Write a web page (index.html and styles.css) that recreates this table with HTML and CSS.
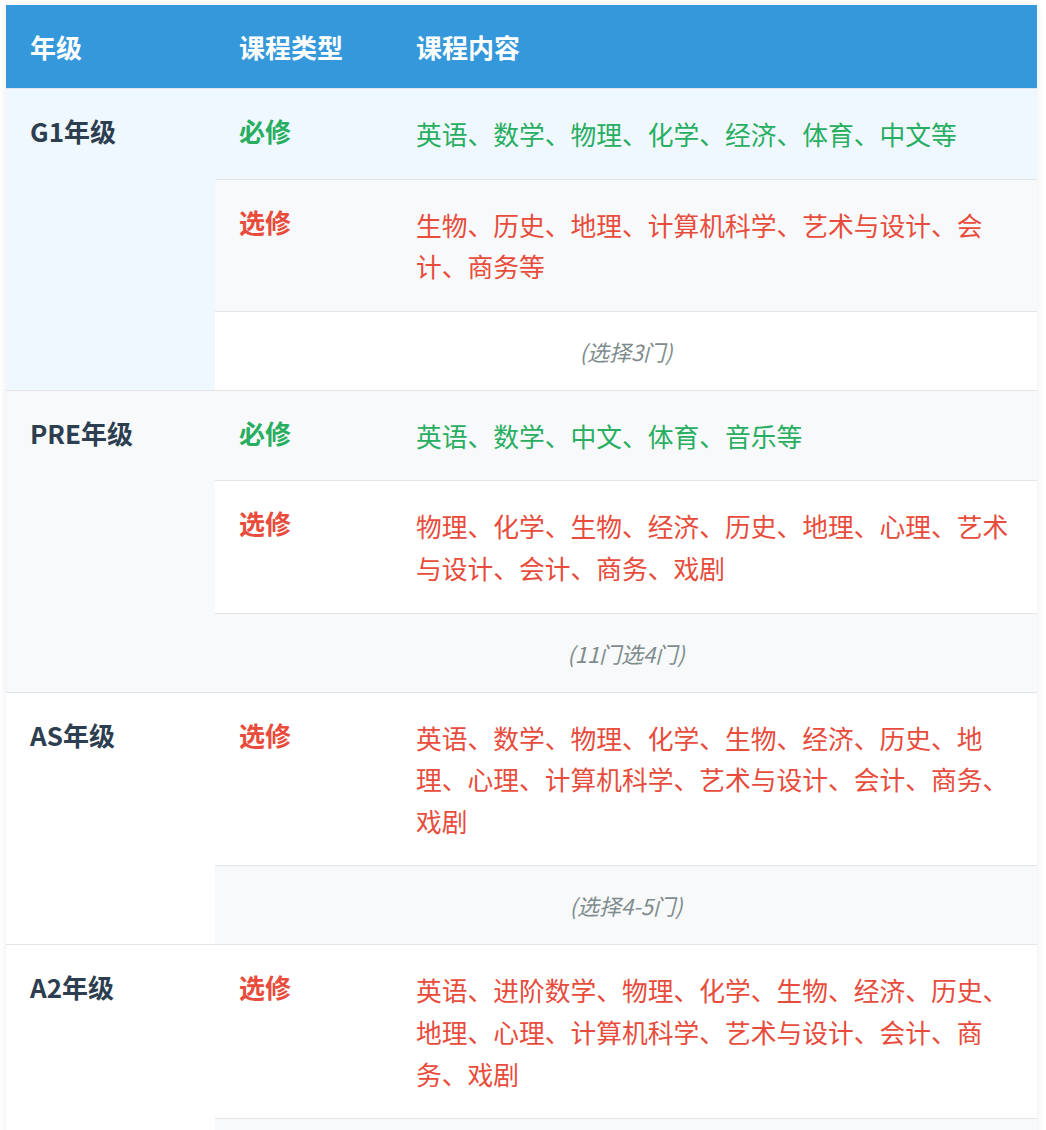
FILE: index.html
```html
<!DOCTYPE html>
<html lang="zh-CN">
<head>
<meta charset="utf-8">
<title>课程设置</title>
<link rel="stylesheet" href="styles.css">
</head>
<body>
<div class="wrap">
  <table class="course-table">
    <thead>
      <tr>
        <th class="col-grade">年级</th>
        <th class="col-type">课程类型</th>
        <th class="col-content">课程内容</th>
      </tr>
    </thead>
    <tbody>
      <tr class="hl">
        <td class="grade" rowspan="3">G1年级</td>
        <td class="type must">必修</td>
        <td class="content must">英语、数学、物理、化学、经济、体育、中文等</td>
      </tr>
      <tr>
        <td class="type opt">选修</td>
        <td class="content opt">生物、历史、地理、计算机科学、艺术与设计、会计、商务等</td>
      </tr>
      <tr>
        <td class="note" colspan="2">(选择3门)</td>
      </tr>
      <tr>
        <td class="grade" rowspan="3">PRE年级</td>
        <td class="type must">必修</td>
        <td class="content must">英语、数学、中文、体育、音乐等</td>
      </tr>
      <tr>
        <td class="type opt">选修</td>
        <td class="content opt">物理、化学、生物、经济、历史、地理、心理、艺术与设计、会计、商务、戏剧</td>
      </tr>
      <tr>
        <td class="note" colspan="2">(11门选4门)</td>
      </tr>
      <tr>
        <td class="grade" rowspan="2">AS年级</td>
        <td class="type opt">选修</td>
        <td class="content opt">英语、数学、物理、化学、生物、经济、历史、地理、心理、计算机科学、艺术与设计、会计、商务、戏剧</td>
      </tr>
      <tr>
        <td class="note" colspan="2">(选择4-5门)</td>
      </tr>
      <tr>
        <td class="grade" rowspan="2">A2年级</td>
        <td class="type opt">选修</td>
        <td class="content opt">英语、进阶数学、物理、化学、生物、经济、历史、地理、心理、计算机科学、艺术与设计、会计、商务、戏剧</td>
      </tr>
      <tr>
        <td class="note" colspan="2">(选择3-4门)</td>
      </tr>
    </tbody>
  </table>
</div>
</body>
</html>
```

FILE: styles.css
```css
html, body {
  margin: 0;
  padding: 0;
  background: #ffffff;
}

body {
  font-family: "Noto Sans CJK SC", "Microsoft YaHei", sans-serif;
  font-size: 26px;
}

.wrap {
  padding: 5px 9px 0 6px;
}

.course-table {
  width: 100%;
  border-collapse: collapse;
  table-layout: fixed;
  background: #ffffff;
  box-shadow: 0 0 8px rgba(0, 0, 0, 0.08);
}

.course-table th,
.course-table td {
  box-sizing: border-box;
  padding: 24px 16px 24px 24px;
  text-align: left;
  vertical-align: top;
  border-bottom: 1px solid #e3e5e8;
}

.course-table th {
  background: #3498db;
  color: #ffffff;
  font-weight: 700;
  line-height: 35px;
}

.col-grade {
  width: 209px;
}

.col-type {
  width: 177px;
}

.course-table tbody tr:nth-child(even) {
  background: #f8f9fa;
}

.course-table tbody tr.hl {
  background: #f0f8ff;
}

.grade {
  color: #2c3e50;
  font-weight: 700;
  line-height: 36px;
}

.type {
  font-weight: 700;
  line-height: 36px;
}

.content {
  font-size: 25.75px;
  line-height: 41.6px;
}

.must {
  color: #27ae60;
}

.opt {
  color: #e74c3c;
}

.course-table td.note {
  text-align: center;
  font-style: italic;
  color: #7f8c8d;
  font-size: 22px;
  line-height: 30px;
  padding-left: 24px;
  padding-right: 24px;
}
```
